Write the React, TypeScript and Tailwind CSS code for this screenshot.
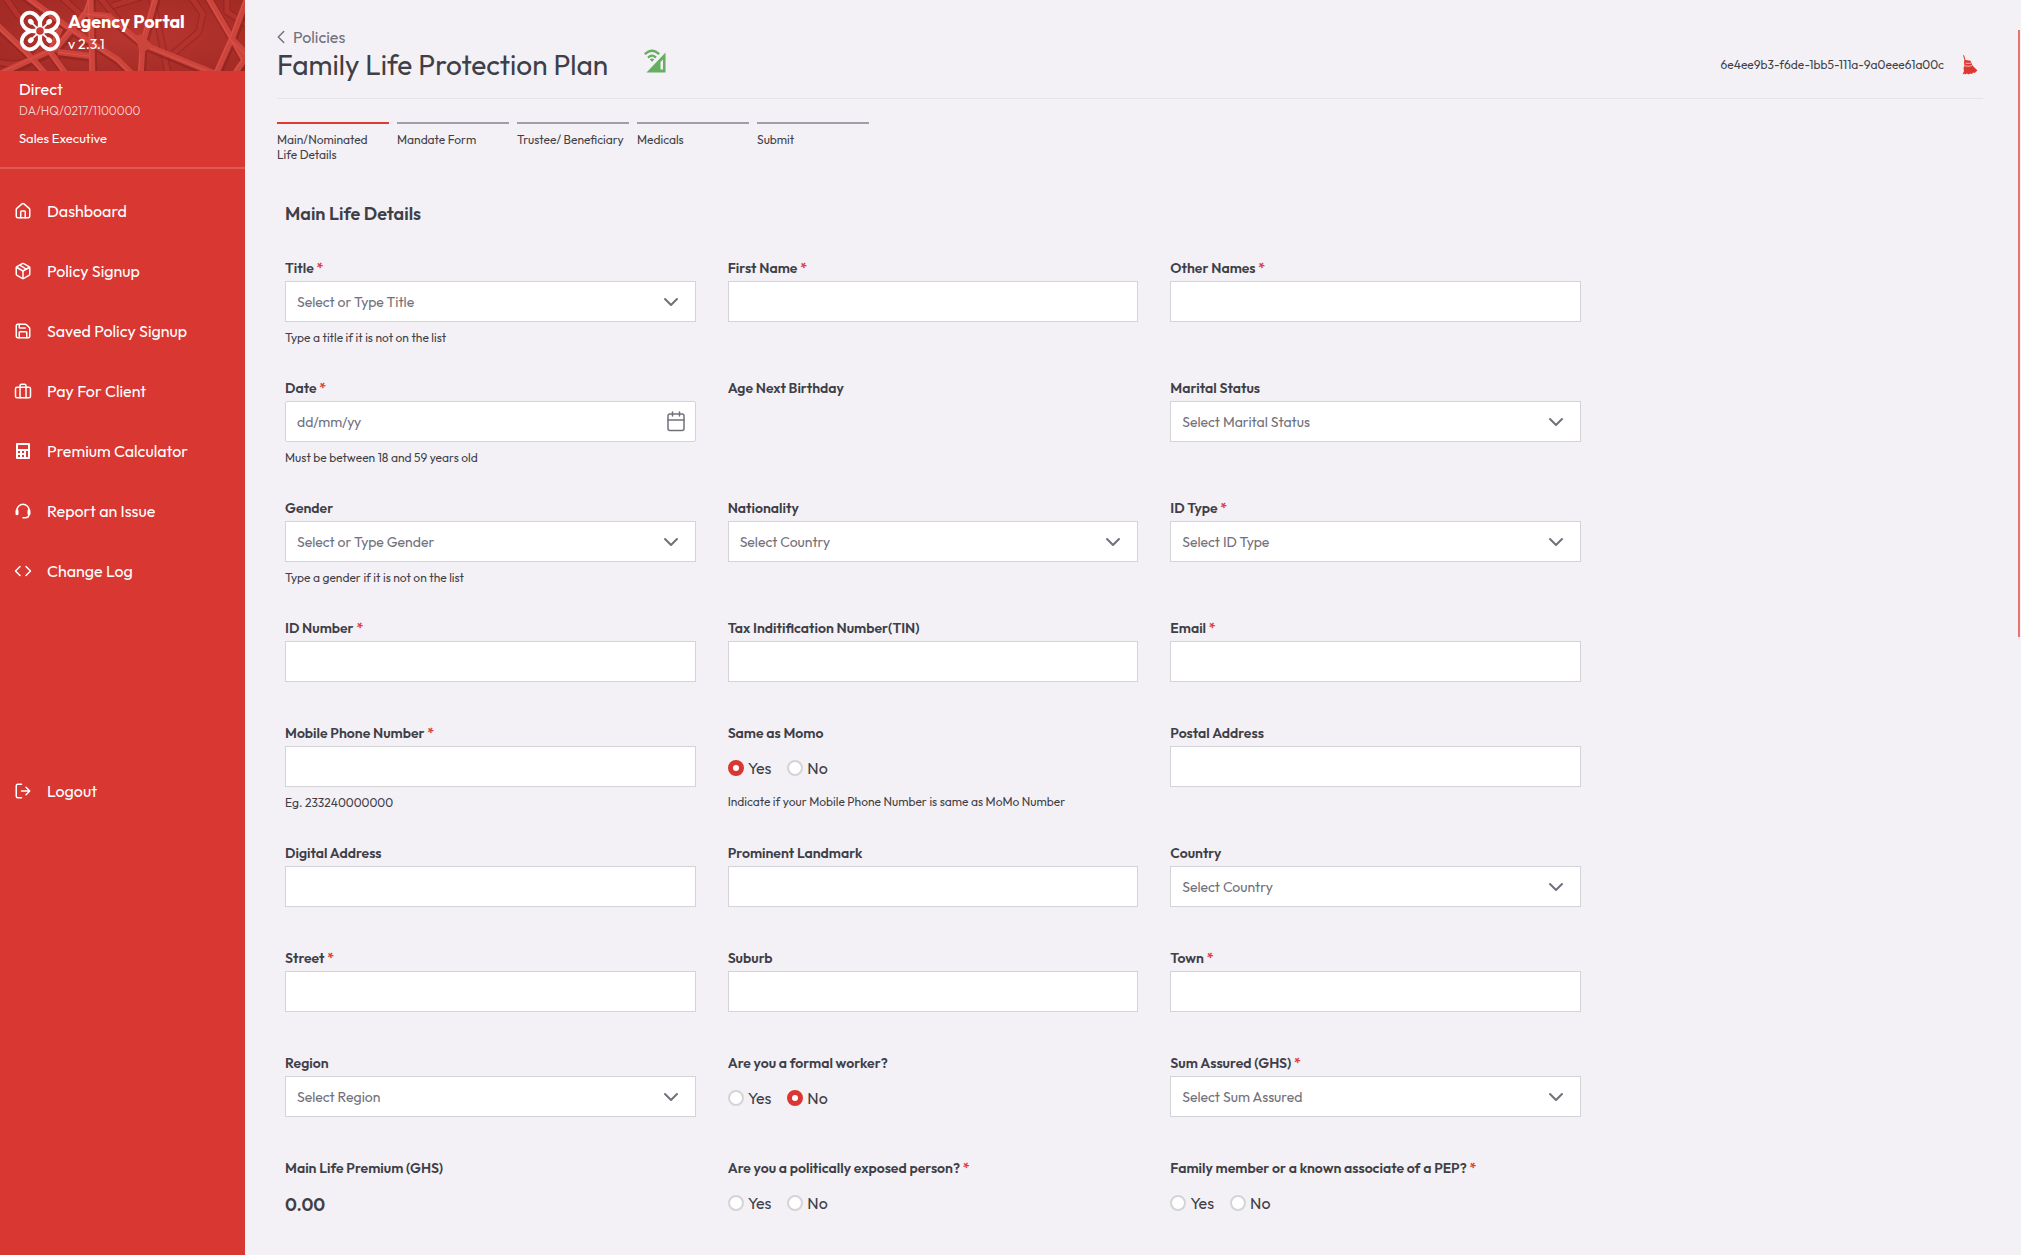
import type { ReactNode } from "react";
import { Calendar, ChevronDown, ChevronLeft, Code, House, Package, Save } from "lucide-react";

const stroke = {
  fill: "none",
  stroke: "currentColor",
  strokeWidth: 2,
  strokeLinecap: "round" as const,
  strokeLinejoin: "round" as const,
};

function Logo() {
  return (
    <svg viewBox="0 0 42 42" className="h-[42px] w-[42px] shrink-0" aria-hidden="true">
      {[45, 135, 225, 315].map((angle) => (
        <g key={angle} transform={`rotate(${angle} 21 21)`}>
          <path
            d="M23.500 18.200C27 14 31 12.200 36 12.800C40.500 13.500 43.500 17 43.500 21C43.500 25 40.500 28.500 36 29.200C31 29.800 27 28 23.500 23.800"
            fill="none"
            stroke="#fff"
            strokeWidth="3.900"
          />
          <path d="M25 21H33" stroke="#fff" strokeWidth="1.800" />
          <ellipse cx="34" cy="21" rx="3.200" ry="2.500" fill="#fff" />
        </g>
      ))}
      <circle cx="21" cy="21" r="4.500" fill="#c93a34" stroke="#fff" strokeWidth="1.400" />
    </svg>
  );
}

function HeaderPattern() {
  const mesh =
    "M-4 24L26 52L46 74M-6 76L56 48L86 12L92 -6M22 -6L66 26L118 60L134 76M60 28L50 52L66 74M90 -6L91 40L92 76M86 14L108 16L142 44L240 84M156 -6L142 44L140 76M204 -8L232 40L250 58M250 -12L232 36L214 76M232 40L243 60L232 76M58 52L90 56";
  const under =
    "M0 62C20 68 34 60 44 44M98 -4L126 30M150 -4C160 30 162 50 168 76M172 54L198 32L202 14L188 -6M226 -4V12L248 26M112 6L150 -6M4 -4L20 18M60 -4L84 18";
  return (
    <svg
      viewBox="0 0 244 71"
      preserveAspectRatio="xMidYMid slice"
      className="absolute inset-0 h-full w-full"
      aria-hidden="true"
    >
      <defs>
        <radialGradient id="deep" cx="55%" cy="50%" r="65%">
          <stop offset="0" stopColor="#b93630" />
          <stop offset="1" stopColor="#a32a25" />
        </radialGradient>
      </defs>
      <rect width="244" height="71" fill="url(#deep)" />
      <g fill="none" strokeLinejoin="round">
        <path d={under} stroke="#8f231f" strokeWidth="7" opacity="0.700" />
        <path d={under} stroke="#b4322d" strokeWidth="5" />
        <path d={mesh} stroke="#86201b" strokeWidth="8" transform="translate(1 2)" opacity="0.500" />
        <path d={mesh} stroke="#cc453d" strokeWidth="6" />
        <path d={mesh} stroke="#dc5049" strokeWidth="1" transform="translate(-2 0)" />
        <path d="M134 36L142 34L152 46L140 54Z" fill="#cc453d" />
      </g>
    </svg>
  );
}

function CalculatorIcon() {
  return (
    <svg viewBox="0 0 18 18" className="h-[18px] w-[18px]" fill="currentColor" fillRule="evenodd" aria-hidden="true">
      <path d="M3 1h12a1 1 0 0 1 1 1v14a1 1 0 0 1-1 1H3a1 1 0 0 1-1-1V2a1 1 0 0 1 1-1zM4 3v4h10V3zM4 9v2h2V9zm4 0v2h2V9zm4 0v6h2V9zM4 13v2h2v-2zm4 0v2h2v-2z" />
    </svg>
  );
}

function HeadsetIcon() {
  return (
    <svg viewBox="0 0 24 24" className="h-[18px] w-[18px]" {...stroke} aria-hidden="true">
      <path d="M4 11a8 8 0 0 1 16 0M20 16c0 3-2 5-5 5h-3" />
      <path d="M4 11.500v4M20 11.500v4" strokeWidth="4" />
    </svg>
  );
}

function LogoutIcon() {
  return (
    <svg viewBox="0 0 24 24" className="h-[18px] w-[18px]" {...stroke} aria-hidden="true">
      <path d="M10 3H5a2 2 0 0 0-2 2v14a2 2 0 0 0 2 2h5M10 12h11M16 7l5 5-5 5" />
    </svg>
  );
}

function BriefcaseIcon() {
  return (
    <svg viewBox="0 0 24 24" className="h-[18px] w-[18px]" {...stroke} aria-hidden="true">
      <rect x="2" y="7" width="20" height="14" rx="2" />
      <path d="M8 21V5a2 2 0 0 1 2-2h4a2 2 0 0 1 2 2v16" />
    </svg>
  );
}

function SignalIcon() {
  return (
    <svg viewBox="0 0 22 24" className="-mt-2 h-6 w-[22px]" aria-label="Online" role="img">
      <path d="M21.500 3.500V23.500H2.500ZM16.500 13V20.500H19V10.500Z" fill="#67ae60" fillRule="evenodd" />
      <path d="M0.800 5.200Q8 -1.800 15.200 5.200" fill="none" stroke="#67ae60" strokeWidth="2.400" />
      <path d="M4 8.600Q8 4.800 12 8.600" fill="none" stroke="#67ae60" strokeWidth="2.200" />
      <path d="M8 12.800L5.800 10.400Q8 8.800 10.200 10.400Z" fill="#67ae60" />
    </svg>
  );
}

function BroomIcon() {
  return (
    <svg viewBox="0 0 16 20" className="h-5 w-4" aria-hidden="true">
      <path
        d="M1 0L2.200 .5L3.500 5L8.500 5.800L10.500 10.500L15.500 15.500L13.500 17L13 18L11 17.600L10 19L8 18.400L6.500 19.500L5 18.600L3 19.600L2.500 18.500L.5 19.500L2 16L1.500 13L2.500 11L2 7.500L2.400 5Z"
        fill="#dc3730"
      />
      <path d="M3.500 8Q6 9 9 8M3 10.800Q6 12 10 10.600" fill="none" stroke="#f3f1f6" strokeWidth="0.700" />
    </svg>
  );
}

const small = "h-[18px] w-[18px]";
const nav: { label: string; icon: ReactNode }[] = [
  { label: "Dashboard", icon: <House className={small} /> },
  { label: "Policy Signup", icon: <Package className={small} /> },
  { label: "Saved Policy Signup", icon: <Save className={small} /> },
  { label: "Pay For Client", icon: <BriefcaseIcon /> },
  { label: "Premium Calculator", icon: <CalculatorIcon /> },
  { label: "Report an Issue", icon: <HeadsetIcon /> },
  { label: "Change Log", icon: <Code className={small} /> },
];

function NavLink({ label, icon }: { label: string; icon: ReactNode }) {
  return (
    <a href="#" className="flex h-[60px] items-center gap-[15px] pl-[14px] text-base text-white">
      {icon}
      <span>{label}</span>
    </a>
  );
}

function Sidebar() {
  return (
    <aside className="flex w-[245px] shrink-0 flex-col bg-[#d93731] text-white">
      <div className="relative h-[71px] overflow-hidden">
        <HeaderPattern />
        <div className="relative flex gap-[7px] pt-[10px] pl-[19px]">
          <Logo />
          <div>
            <div className="text-lg leading-6 font-bold">Agency Portal</div>
            <div className="text-sm leading-5">v 2.3.1</div>
          </div>
        </div>
      </div>
      <div className="h-[98px] border-b-2 border-[#df5a55] pt-[6px] pl-[19px]">
        <div className="text-base leading-6">Direct</div>
        <div className="text-xs leading-5 font-light text-[#f6d5d5]">DA/HQ/0217/1100000</div>
        <div className="mt-[7px] text-[13px] leading-5">Sales Executive</div>
      </div>
      <nav className="pt-3">
        {nav.map((item) => (
          <NavLink key={item.label} {...item} />
        ))}
        <div className="pt-40">
          <NavLink label="Logout" icon={<LogoutIcon />} />
        </div>
      </nav>
    </aside>
  );
}

type FieldDef = {
  id: string;
  label: string;
  required?: boolean;
  kind?: "text" | "select" | "combo" | "date" | "radio" | "none" | "value";
  text?: string;
  hint?: string;
};

const fields: FieldDef[] = [
  { id: "title", label: "Title", required: true, kind: "combo", text: "Select or Type Title", hint: "Type a title if it is not on the list" },
  { id: "first-name", label: "First Name", required: true },
  { id: "other-names", label: "Other Names", required: true },
  { id: "date", label: "Date", required: true, kind: "date", text: "dd/mm/yy", hint: "Must be between 18 and 59 years old" },
  { id: "age", label: "Age Next Birthday", kind: "none" },
  { id: "marital", label: "Marital Status", kind: "select", text: "Select Marital Status" },
  { id: "gender", label: "Gender", kind: "combo", text: "Select or Type Gender", hint: "Type a gender if it is not on the list" },
  { id: "nationality", label: "Nationality", kind: "select", text: "Select Country" },
  { id: "id-type", label: "ID Type", required: true, kind: "select", text: "Select ID Type" },
  { id: "id-number", label: "ID Number", required: true },
  { id: "tin", label: "Tax Inditification Number(TIN)" },
  { id: "email", label: "Email", required: true },
  { id: "mobile", label: "Mobile Phone Number", required: true, hint: "Eg. 233240000000" },
  { id: "momo", label: "Same as Momo", kind: "radio", text: "Yes", hint: "Indicate if your Mobile Phone Number is same as MoMo Number" },
  { id: "postal", label: "Postal Address" },
  { id: "digital", label: "Digital Address" },
  { id: "landmark", label: "Prominent Landmark" },
  { id: "country", label: "Country", kind: "select", text: "Select Country" },
  { id: "street", label: "Street", required: true },
  { id: "suburb", label: "Suburb" },
  { id: "town", label: "Town", required: true },
  { id: "region", label: "Region", kind: "select", text: "Select Region" },
  { id: "formal", label: "Are you a formal worker?", kind: "radio", text: "No" },
  { id: "sum", label: "Sum Assured (GHS)", required: true, kind: "select", text: "Select Sum Assured" },
  { id: "premium", label: "Main Life Premium (GHS)", kind: "value", text: "0.00" },
  { id: "pep", label: "Are you a politically exposed person?", required: true, kind: "radio" },
  { id: "pep-family", label: "Family member or a known associate of a PEP?", required: true, kind: "radio" },
];

const box =
  "block h-[41px] w-full border border-zinc-300 bg-white px-[11px] text-sm text-zinc-500 placeholder:text-zinc-500 outline-none";

function Control({ id, kind = "text", text }: FieldDef) {
  if (kind === "radio") {
    return (
      <div className="flex h-10 items-center gap-4 pt-[3px]">
        {["Yes", "No"].map((option) => (
          <label key={option} className="flex items-center gap-1 text-base leading-6">
            <input
              type="radio"
              name={id}
              value={option}
              defaultChecked={text === option}
              className="h-4 w-4 appearance-none rounded-full border-2 border-zinc-300 bg-white checked:border-[5px] checked:border-[#d93731]"
            />
            {option}
          </label>
        ))}
      </div>
    );
  }
  if (kind === "value") {
    return (
      <output id={id} className="flex h-[41px] items-center pt-[7px] text-lg font-semibold">
        {text}
      </output>
    );
  }
  if (kind === "none") return <output id={id} className="block h-[41px]" />;
  if (kind === "select") {
    return (
      <div className="relative">
        <select id={id} defaultValue="" className={`${box} appearance-none`}>
          <option value="">{text}</option>
        </select>
        <ChevronDown className="pointer-events-none absolute top-[9px] right-[13px] h-6 w-6 text-zinc-500" strokeWidth={2} />
      </div>
    );
  }
  if (kind === "combo") {
    return (
      <div className="relative">
        <input id={id} type="text" role="combobox" aria-expanded="false" placeholder={text} className={box} />
        <button type="button" aria-label="Show options" className="absolute top-[9px] right-[13px] text-zinc-500">
          <ChevronDown className="h-6 w-6" strokeWidth={2} />
        </button>
      </div>
    );
  }
  if (kind === "date") {
    return (
      <div className="relative">
        <input id={id} type="text" placeholder={text} className={`${box} rounded-xs`} />
        <button type="button" aria-label="Open calendar" className="absolute top-2 right-2 text-zinc-500">
          <svg viewBox="0 0 24 24" className="h-6 w-6" {...stroke} strokeWidth={1.5} aria-hidden="true">
            <rect x="4" y="5" width="16" height="16.500" rx="2" />
            <path d="M4 11h16M8.500 3v4M15.500 3v4" />
          </svg>
        </button>
      </div>
    );
  }
  return <input id={id} type="text" className={box} />;
}

function Field(props: FieldDef) {
  const { id, label, required, kind, hint } = props;
  const caption = (
    <>
      {label}
      {required && <span className="text-[#e03c36]"> *</span>}
    </>
  );
  const captionStyle = "block text-sm leading-5 font-semibold";
  return (
    <div
      className="min-h-[73px]"
      role={kind === "radio" ? "radiogroup" : undefined}
      aria-labelledby={kind === "radio" ? `${id}-label` : undefined}
    >
      {kind === "radio" ? (
        <div id={`${id}-label`} className={captionStyle}>{caption}</div>
      ) : (
        <label htmlFor={id} className={captionStyle}>{caption}</label>
      )}
      <div className="mt-[3px]">
        <Control {...props} />
      </div>
      {hint && <p className="mt-2 text-xs leading-4">{hint}</p>}
    </div>
  );
}

const steps = ["Main/Nominated Life Details", "Mandate Form", "Trustee/ Beneficiary", "Medicals", "Submit"];

export default function App() {
  return (
    <div className="relative flex h-screen overflow-hidden bg-[#f3f1f6] font-['Outfit','Lato',sans-serif] text-zinc-700">
      <Sidebar />
      <main className="min-w-0 flex-1 pr-[38px] pl-8">
        <header className="flex items-center justify-between border-b border-zinc-200 pt-[26px] pb-4">
          <div>
            <a href="#" className="flex items-center gap-px text-base leading-5 text-zinc-500">
              <ChevronLeft className="-ml-[7px] h-[22px] w-[22px]" strokeWidth={1.5} />
              Policies
            </a>
            <div className="flex items-center gap-9">
              <h1 className="text-[28px] leading-[34px]">Family Life Protection Plan</h1>
              <SignalIcon />
            </div>
          </div>
          <div className="flex items-center gap-[18px] pt-[22px] pr-[5px]">
            <span className="text-xs leading-5">6e4ee9b3-f6de-1bb5-111a-9a0eee61a00c</span>
            <button type="button" aria-label="Clear form">
              <BroomIcon />
            </button>
          </div>
        </header>
        <ol className="mt-[23px] flex gap-2">
          {steps.map((step, i) => (
            <li
              key={step}
              className={`w-28 border-t-2 pt-2 text-xs leading-[15px] ${i === 0 ? "border-[#e03a33]" : "border-zinc-400"}`}
            >
              {step}
            </li>
          ))}
        </ol>
        <form className="mt-10 max-w-[1312px] px-2">
          <h2 className="text-lg leading-6 font-semibold">Main Life Details</h2>
          <div className="mt-8 grid grid-cols-3 gap-8">
            {fields.map((field) => (
              <Field key={field.id} {...field} />
            ))}
          </div>
        </form>
      </main>
      <div className="absolute top-[30px] right-px h-[607px] w-0.5 bg-[#e57570]" />
    </div>
  );
}
